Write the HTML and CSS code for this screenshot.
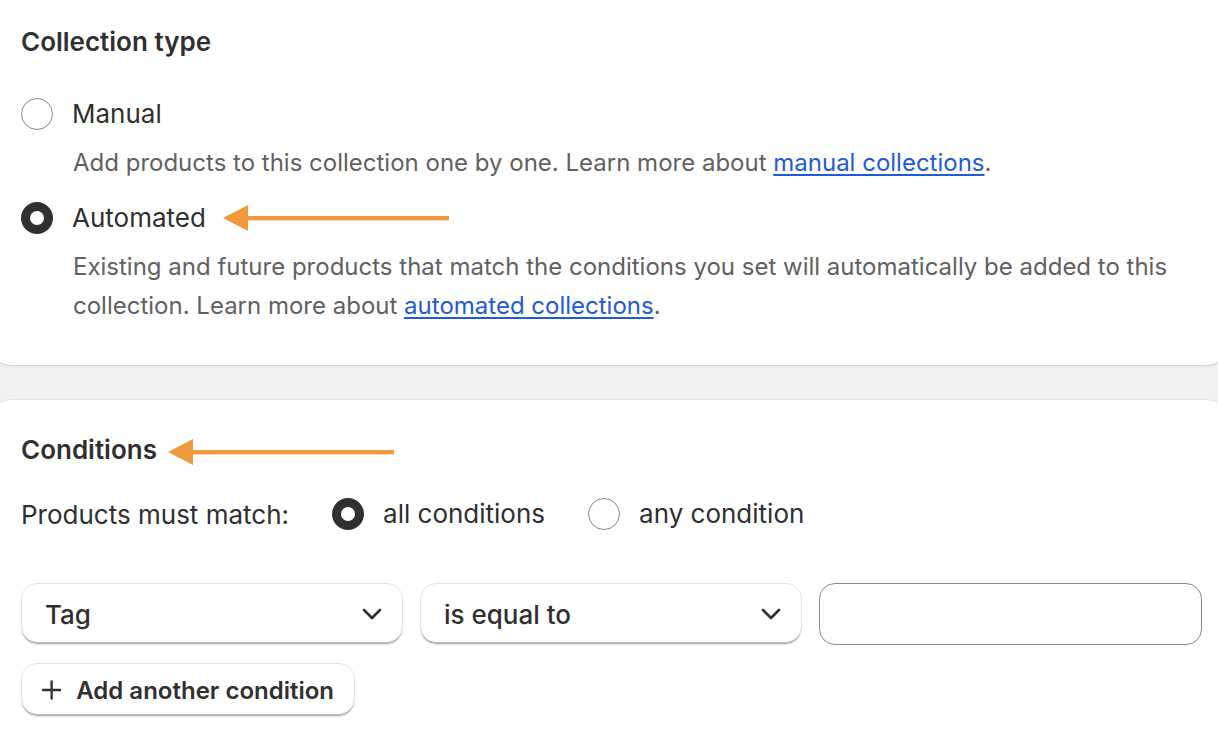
FILE: index.html
```html
<!DOCTYPE html>
<html lang="en">
<head>
<meta charset="utf-8">
<title>Collection type</title>
<link rel="stylesheet" href="styles.css">
</head>
<body>
<div class="page">
  <section class="card card-top">
    <h2 class="heading">Collection type</h2>
    <div class="choice">
      <div class="choice-row">
        <span class="radio"></span>
        <span class="label">Manual</span>
      </div>
      <p class="help">Add products to this collection one by one. Learn more about <a href="#">manual collections</a>.</p>
    </div>
    <div class="choice">
      <div class="choice-row">
        <span class="radio checked"></span>
        <span class="label">Automated</span>
        <svg class="arrow arrow-a" width="226" height="26" viewBox="0 0 226 26"><polygon points="0,13 25,0 25,26" fill="#f0993a"/><rect x="20" y="11" width="206" height="4.4" fill="#f0993a"/></svg>
      </div>
      <p class="help">Existing and future products that match the conditions you set will automatically be added to this collection. Learn more about <a href="#">automated collections</a>.</p>
    </div>
  </section>

  <section class="card card-bottom">
    <div class="heading-row">
      <h2 class="heading">Conditions</h2>
      <svg class="arrow arrow-c" width="226" height="26" viewBox="0 0 226 26"><polygon points="0,13 25,0 25,26" fill="#f0993a"/><rect x="20" y="11" width="206" height="4.4" fill="#f0993a"/></svg>
    </div>
    <div class="match-row">
      <span class="match-label">Products must match:</span>
      <span class="opt"><span class="radio checked"></span><span class="label">all conditions</span></span>
      <span class="opt"><span class="radio"></span><span class="label">any condition</span></span>
    </div>
    <div class="fields">
      <div class="select"><span>Tag</span><svg class="chev" width="20" height="12" viewBox="0 0 20 12"><path d="M2 2 L10 10 L18 2" fill="none" stroke="#303030" stroke-width="2.6" stroke-linecap="round" stroke-linejoin="round"/></svg></div>
      <div class="select"><span>is equal to</span><svg class="chev" width="20" height="12" viewBox="0 0 20 12"><path d="M2 2 L10 10 L18 2" fill="none" stroke="#303030" stroke-width="2.6" stroke-linecap="round" stroke-linejoin="round"/></svg></div>
      <div class="input"></div>
    </div>
    <button class="btn" type="button"><svg width="20" height="20" viewBox="0 0 20 20"><path d="M10 1 V19 M1 10 H19" stroke="#303030" stroke-width="2.4" stroke-linecap="round"/></svg><span>Add another condition</span></button>
  </section>
</div>
</body>
</html>
```

FILE: styles.css
```css
* { box-sizing: border-box; }
html, body { margin: 0; padding: 0; }
body {
  background: #f1f1f1;
  font-family: Inter, "Noto Sans", sans-serif;
  color: #303030;
  overflow: hidden;
  height: 744px;
}
.page {
  margin: -30px -12px 0;
  display: flex;
  flex-direction: column;
  gap: 34px;
}
.card {
  background: #ffffff;
  border-radius: 24px;
  padding: 0 33px;
}
.card-top {
  padding-top: 55px;
  padding-bottom: 40px;
  box-shadow: 0 1px 0 #d4d4d4, 0 2px 2px rgba(0,0,0,0.06);
}
.card-bottom {
  padding-top: 33px;
  padding-bottom: 60px;
  border-top: 1px solid #e3e3e3;
}
.heading {
  margin: 0;
  font-size: 26px;
  font-weight: 600;
  line-height: 34px;
}
.choice { margin-top: 35px; }
.choice + .choice { margin-top: 16px; }
.choice-row {
  display: flex;
  align-items: center;
  height: 40px;
}
.radio {
  width: 32px;
  height: 32px;
  border-radius: 50%;
  border: 1.3px solid #8a8a8a;
  background: #fdfdfd;
  flex: none;
}
.radio.checked {
  border: 9.5px solid #303030;
  background: #ffffff;
}
.label {
  font-size: 26px;
  margin-left: 19px;
  line-height: 40px;
}
.arrow { flex: none; display: block; }
.arrow-a { margin-left: 17px; }
.help {
  margin: 9px 0 0 52px;
  font-size: 24px;
  line-height: 39px;
  color: #616161;
}
.help a { color: #1f5bd6; text-decoration: underline; text-underline-offset: 3px; }
.heading-row {
  display: flex;
  align-items: center;
  height: 34px;
}
.arrow-c { margin-left: 11px; margin-top: 3px; }
.match-row {
  margin-top: 27px;
  display: flex;
  align-items: center;
  height: 40px;
  font-size: 26px;
}
.match-label { margin-right: 43px; }
.opt { display: flex; align-items: center; margin-right: 43px; }
.opt .label { margin-left: 19px; }
.fields {
  margin-top: 49px;
  display: grid;
  grid-template-columns: 382px 382px 383px;
  gap: 17px;
}
.select, .input {
  height: 62px;
  border-radius: 16px;
}
.select {
  display: flex;
  align-items: center;
  justify-content: space-between;
  padding: 0 20px 0 23px;
  font-size: 26px;
  font-weight: 500;
  border: 1px solid #e3e3e3;
  box-shadow: inset 0 -2px 0 #b8b8b8;
  background: #fff;
}
.input {
  border: 1.3px solid #8a8a8a;
  background: #fdfdfd;
}
.btn {
  margin-top: 18px;
  height: 54px;
  width: 334px;
  display: flex;
  align-items: center;
  gap: 15px;
  padding: 0 20px;
  border-radius: 16px;
  border: 1px solid #e3e3e3;
  box-shadow: inset 0 -2px 0 #b8b8b8;
  background: #fff;
  font-family: inherit;
  font-size: 24px;
  font-weight: 600;
  color: #303030;
  white-space: nowrap;
}
```
